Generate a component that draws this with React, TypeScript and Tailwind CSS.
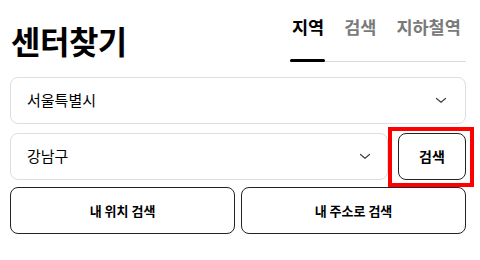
const font = { fontFamily: '"Noto Sans CJK KR", "Noto Sans", sans-serif' }

function Chevron() {
  return (
    <svg width="12" height="7" viewBox="0 0 12 7" fill="none" className="text-[#444]">
      <path d="M1.5 1.5 L6 5.3 L10.5 1.5" stroke="currentColor" strokeWidth="1.2" strokeLinecap="round" strokeLinejoin="round" />
    </svg>
  )
}

export default function App() {
  const tabs = ['지역', '검색', '지하철역']

  return (
    <div className="w-[480px] h-[260px] bg-white pl-[10px] pr-[14px] text-black" style={font}>
      {/* Header */}
      <div className="flex items-start justify-between h-[62px]">
        <h1 className="mt-[16px] text-[32px] font-bold leading-[48px] tracking-[-0.5px] pl-[1px]">센터찾기</h1>
        <div className="flex gap-[20px] border-b border-[#d9d9d9] w-[176px] pl-[2px] pt-[15px]">
          {tabs.map((t, i) => (
            <div
              key={t}
              className={
                i === 0
                  ? 'relative text-[17.5px] font-bold leading-[24px] pb-[22px] text-black'
                  : 'relative text-[17.5px] font-bold leading-[24px] pb-[22px] text-[#7a7a7a]'
              }
            >
              {t}
              {i === 0 && (
                <span className="absolute left-[-2px] right-[-1px] bottom-[-1px] h-[3px] rounded-full bg-black" />
              )}
            </div>
          ))}
        </div>
      </div>

      {/* City select */}
      <div className="mt-[15px] h-[47px] rounded-[8px] border border-[#dedede] flex items-center justify-between pl-[16px] pr-[18px]">
        <span className="text-[15px]">서울특별시</span>
        <Chevron />
      </div>

      {/* District select + search */}
      <div className="mt-[9px] flex gap-[10px]">
        <div className="flex-1 h-[47px] rounded-[8px] border border-[#dedede] flex items-center justify-between pl-[16px] pr-[16px]">
          <span className="text-[15px]">강남구</span>
          <Chevron />
        </div>
        <div className="relative">
          <button className="w-[68px] h-[47px] rounded-[8px] border border-[#222] text-[14px] font-semibold bg-white">
            검색
          </button>
          <span className="pointer-events-none absolute left-[-10px] right-[-8px] top-[-6px] bottom-[-7px] border-[4px] border-[#ff0000]" />
        </div>
      </div>

      {/* Location buttons */}
      <div className="mt-[7px] flex gap-[6px]">
        <button className="flex-1 h-[47px] rounded-[8px] border border-[#222] text-[13px] font-bold bg-white">
          내 위치 검색
        </button>
        <button className="flex-1 h-[47px] rounded-[8px] border border-[#222] text-[13px] font-bold bg-white">
          내 주소로 검색
        </button>
      </div>
    </div>
  )
}
